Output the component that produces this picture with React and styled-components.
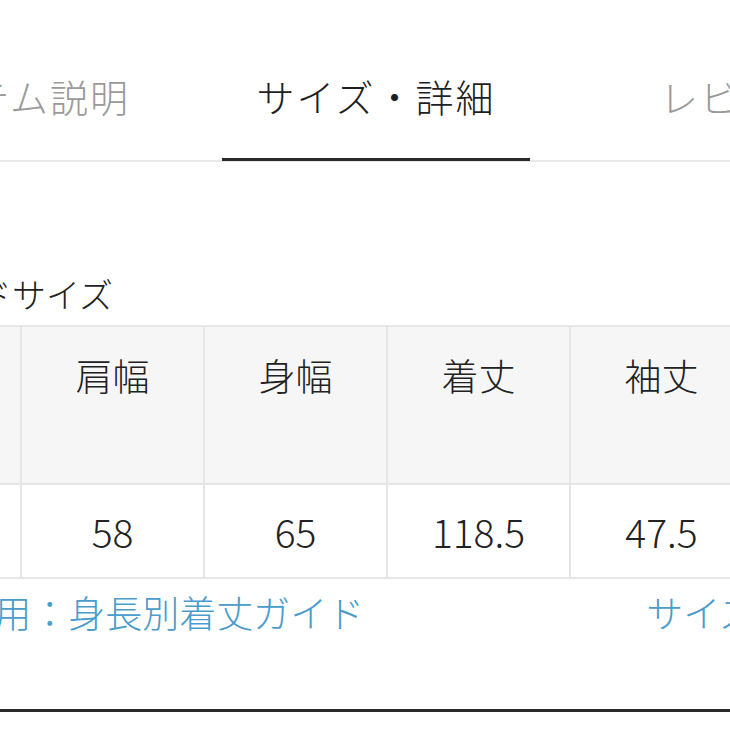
import React from "react";
import styled, { createGlobalStyle } from "styled-components";

const GlobalStyle = createGlobalStyle`
  html, body {
    margin: 0;
    padding: 0;
    background: #ffffff;
  }
  body {
    font-family: "Noto Sans CJK JP", "Noto Sans", sans-serif;
    font-weight: 300;
    color: #222;
  }
`;

const Page = styled.div`
  width: 730px;
  height: 730px;
  overflow: hidden;
  background: #fff;
`;

const TabBar = styled.div`
  display: flex;
  width: 1460px;
  margin-left: -170px;
  border-bottom: 2px solid #e9e9e9;
`;

const Tab = styled.div`
  position: relative;
  flex: 0 0 364px;
  height: 160px;
  padding-top: 76px;
  box-sizing: border-box;
  text-align: center;
  font-size: 38px;
  line-height: 40px;
  letter-spacing: 2px;
  color: ${(p) => (p.$active ? "#1e1e1e" : "#9a9a9a")};

  &::after {
    content: "";
    display: ${(p) => (p.$active ? "block" : "none")};
    position: absolute;
    left: 28px;
    right: 28px;
    bottom: -1px;
    height: 3px;
    background: #2b2b2b;
  }
`;

const Content = styled.div`
  margin-left: -161px;
  width: 1300px;
`;

const SectionTitle = styled.h3`
  margin: 0;
  padding: 112px 0 0 71px;
  height: 163px;
  box-sizing: border-box;
  font-size: 34px;
  font-weight: 300;
  line-height: 40px;
  color: #222;
`;

const Table = styled.div`
  display: grid;
  grid-template-columns: repeat(6, 183px);
  border-top: 2px solid #e6e6e6;
  border-bottom: 2px solid #e6e6e6;
`;

const Cell = styled.div`
  box-sizing: border-box;
  border-right: 2px solid #e6e6e6;
  text-align: center;
  background: ${(p) => (p.$head ? "#f6f6f6" : "#ffffff")};
  height: ${(p) => (p.$head ? "158px" : "92px")};
  padding-top: ${(p) => (p.$head ? "26px" : "24px")};
  font-size: ${(p) => (p.$head ? "37px" : "39px")};
  line-height: 44px;
  color: #222;
  border-bottom: ${(p) => (p.$head ? "2px solid #e6e6e6" : "none")};
`;

const Links = styled.div`
  display: flex;
  align-items: center;
  gap: 282px;
  padding-left: 45px;
  height: 66px;
`;

const Link = styled.a`
  font-size: 37px;
  line-height: 44px;
  color: #4a9ccb;
  text-decoration: none;
  white-space: nowrap;
`;

const Rule = styled.div`
  margin-top: 64px;
  margin-left: -20px;
  width: 800px;
  height: 3px;
  background: #2a2a2a;
`;

const heads = ["サイズ", "肩幅", "身幅", "着丈", "袖丈", "裄丈"];
const values = ["F", "58", "65", "118.5", "47.5", "76"];

export default function App() {
  return (
    <Page>
      <GlobalStyle />
      <TabBar>
        <Tab>アイテム説明</Tab>
        <Tab $active>サイズ・詳細</Tab>
        <Tab>レビュー</Tab>
      </TabBar>
      <Content>
        <SectionTitle>ヌードサイズ</SectionTitle>
        <Table>
          {heads.map((h) => (
            <Cell key={h} $head>
              {h}
            </Cell>
          ))}
          {values.map((v, i) => (
            <Cell key={i}>{v}</Cell>
          ))}
        </Table>
        <Links>
          <Link href="#">メンズ用：身長別着丈ガイド</Link>
          <Link href="#">サイズの測り方</Link>
        </Links>
      </Content>
      <Rule />
    </Page>
  );
}
